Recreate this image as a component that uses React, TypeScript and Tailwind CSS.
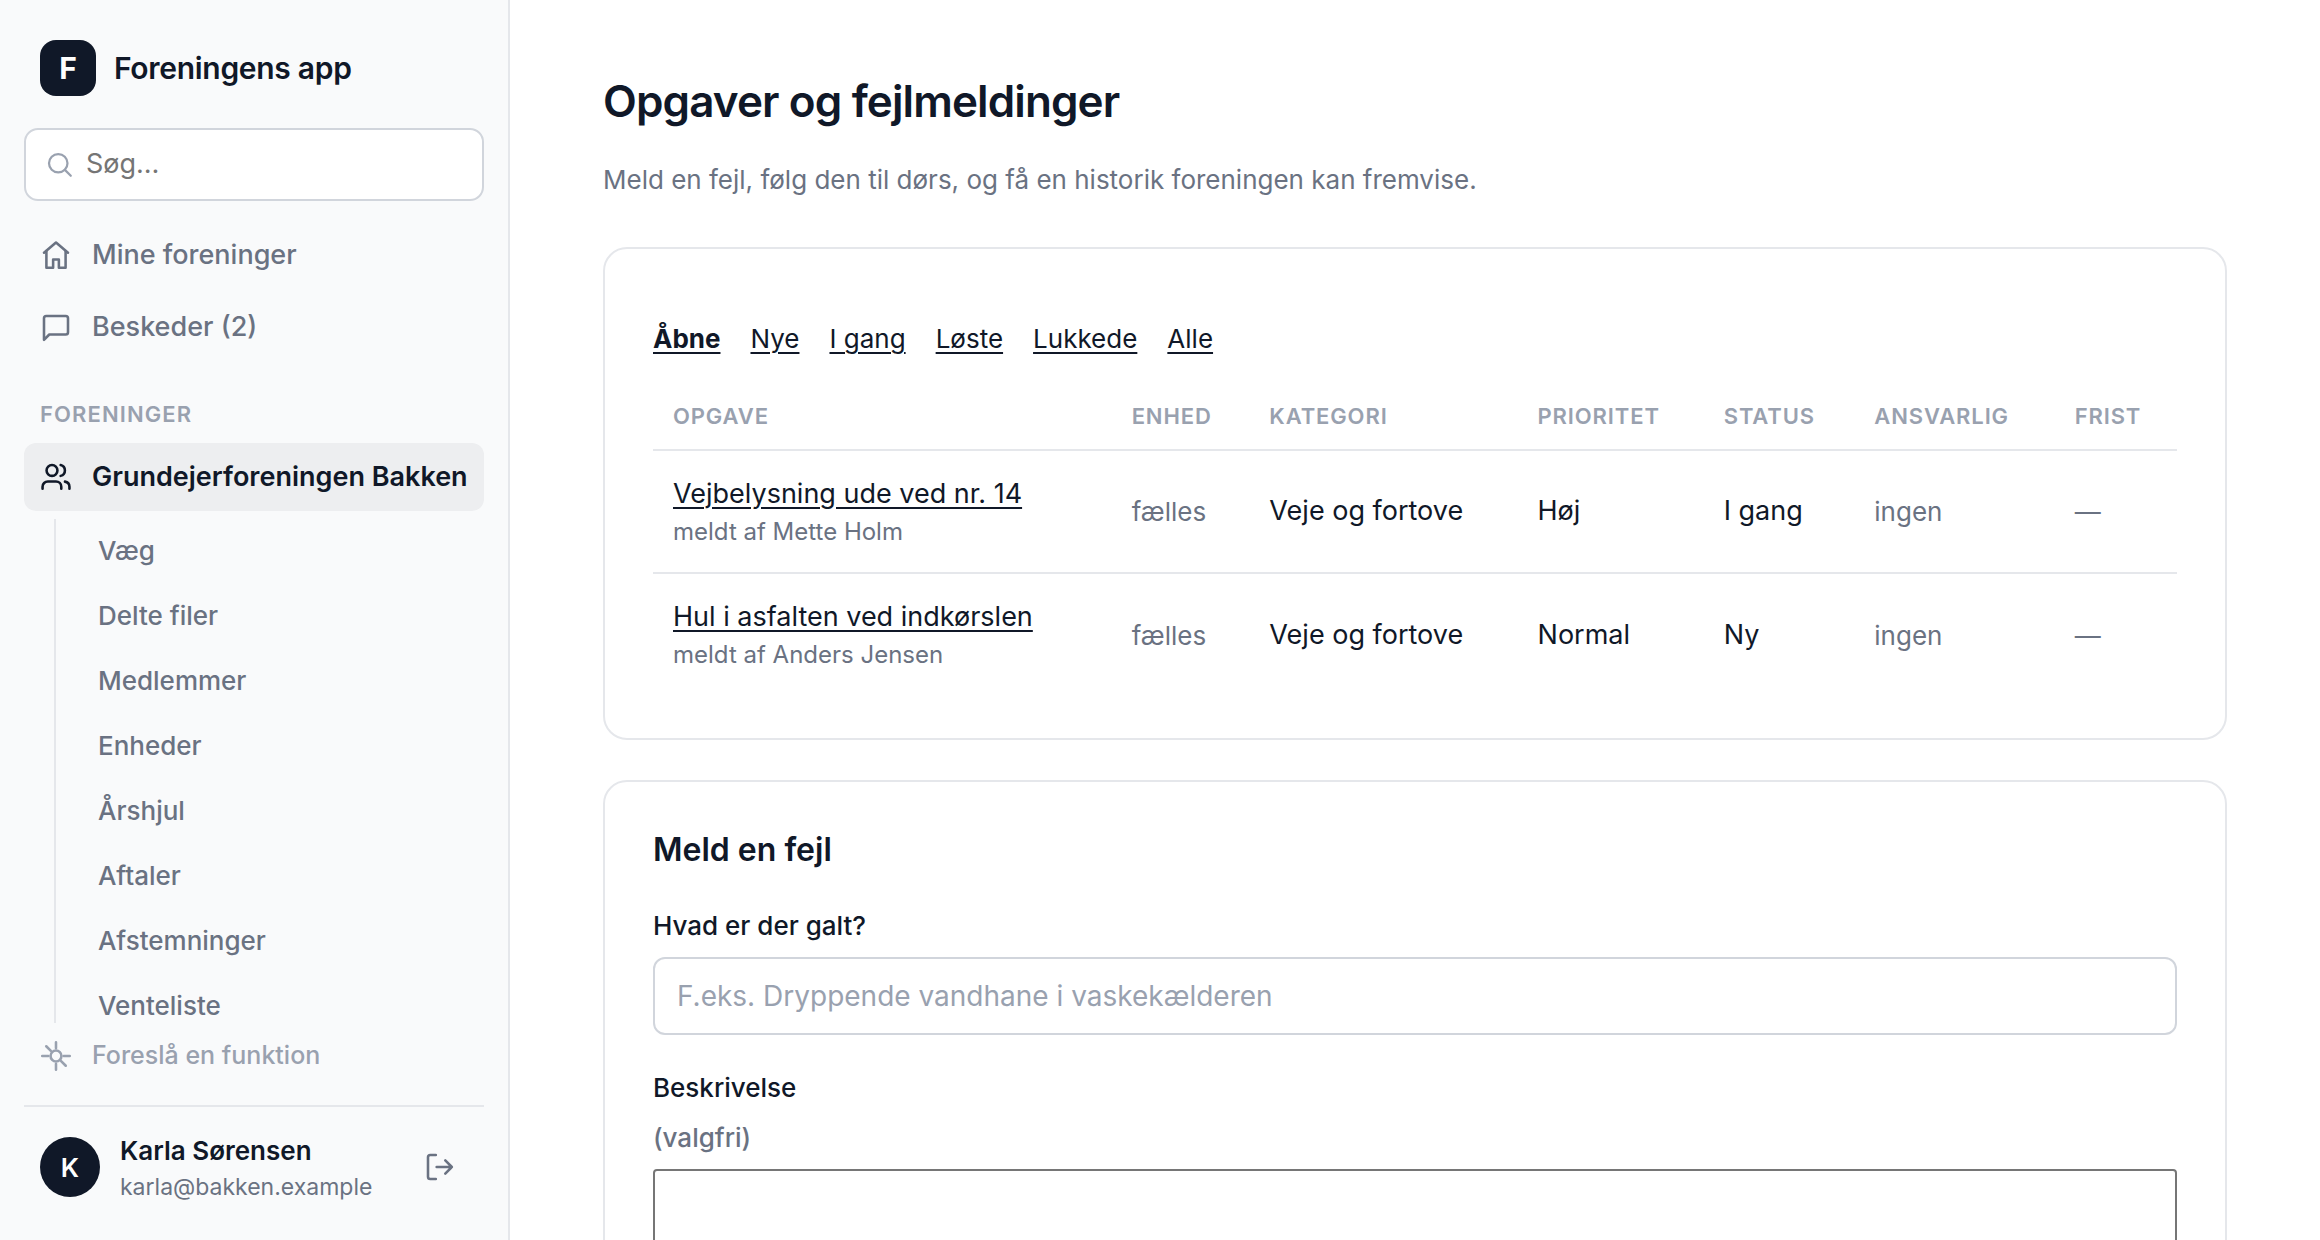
import { useState } from 'react';
import type { ReactNode } from 'react';

const sections = [
  'Væg',
  'Delte filer',
  'Medlemmer',
  'Enheder',
  'Årshjul',
  'Aftaler',
  'Afstemninger',
  'Venteliste',
];

const filters = ['Åbne', 'Nye', 'I gang', 'Løste', 'Lukkede', 'Alle'];

const tasks = [
  { title: 'Vejbelysning ude ved nr. 14', by: 'Mette Holm', category: 'Veje og fortove', priority: 'Høj', status: 'I gang' },
  { title: 'Hul i asfalten ved indkørslen', by: 'Anders Jensen', category: 'Veje og fortove', priority: 'Normal', status: 'Ny' },
];

function Icon({ children, className = 'size-8' }: { children: ReactNode; className?: string }) {
  return (
    <svg
      viewBox="0 0 20 20"
      fill="none"
      stroke="currentColor"
      strokeWidth="1.6"
      strokeLinecap="round"
      strokeLinejoin="round"
      aria-hidden="true"
      className={`shrink-0 ${className}`}
    >
      {children}
    </svg>
  );
}

function Sidebar() {
  return (
    <aside className="flex h-screen w-[510px] shrink-0 flex-col border-r-2 border-gray-200 bg-gray-50 px-6 pt-10 pb-[37px]">
      <a href="#" className="flex items-center gap-[18px] px-4">
        <span className="flex size-14 items-center justify-center rounded-2xl bg-gray-900 text-[30px] font-bold text-white">F</span>
        <span className="text-[30px] font-semibold tracking-[-0.01em] text-gray-900">Foreningens app</span>
      </a>

      <label className="mt-8 flex h-[73px] shrink-0 items-center gap-3 rounded-[14px] border-2 border-gray-300 bg-white px-5">
        <Icon className="size-7 text-gray-400">
          <circle cx="8.75" cy="8.75" r="6.6" />
          <path d="M13.5 13.5l4.2 4.2" />
        </Icon>
        <input type="search" aria-label="Søg" placeholder="Søg…" className="min-w-0 flex-1 text-[27px] outline-none placeholder:text-[#757575]" />
      </label>

      <nav className="mt-5 flex min-h-0 flex-1 flex-col overflow-hidden text-[27px] font-medium text-gray-500">
        <a href="#" className="mb-1 flex h-[68px] shrink-0 items-center gap-5 px-4">
          <Icon>
            <path d="M2.5 8.6L10 2.2l7.5 6.4" />
            <path d="M4 7.5V18h4.2v-5.2h3.6V18H16V7.5" />
          </Icon>
          Mine foreninger
        </a>
        <a href="#" className="flex h-[68px] shrink-0 items-center gap-5 px-4">
          <Icon>
            <path d="M2.5 18V4.5a1.4 1.4 0 0 1 1.4-1.4h12.2a1.4 1.4 0 0 1 1.4 1.4v8.8a1.4 1.4 0 0 1-1.4 1.4H5.8z" />
          </Icon>
          Beskeder (2)
        </a>
        <h2 className="mt-9 px-4 pb-3 text-[22px] leading-[34px] font-semibold tracking-wider text-gray-400">FORENINGER</h2>
        <a href="#" className="flex h-[68px] shrink-0 items-center gap-5 rounded-xl bg-gray-900/5 px-4 font-semibold whitespace-nowrap text-gray-900">
          <Icon>
            <circle cx="7.5" cy="5.9" r="3.4" />
            <path d="M1.6 17.3v-1.2a3.3 3.3 0 0 1 3.3-3.3H10a3.3 3.3 0 0 1 3.3 3.3v1.2" />
            <path d="M12.9 2.5a3.5 3.5 0 0 1 0 6.8" />
            <path d="M18.4 17.3v-1.2a3.3 3.3 0 0 0-2.8-3.2" />
          </Icon>
          Grundejerforeningen Bakken
        </a>
        <ul className="mt-2 ml-[30px] flex flex-col gap-0.5 border-l-2 border-gray-200 text-[26px]">
          {sections.map((name) => (
            <li key={name}>
              <a href="#" className="flex h-[63px] items-center px-[42px]">{name}</a>
            </li>
          ))}
        </ul>
      </nav>

      <a href="#" className="flex h-[66px] shrink-0 items-center gap-5 px-4 text-[25px] font-medium text-gray-400">
        <Icon>
          <circle cx="10" cy="10" r="3.4" />
          <path d="M10 1.4v3.8M10 14.8v3.8M1.4 10h3.8M14.8 10h3.8M3.9 3.9l2.9 2.9M13.2 13.2l2.9 2.9" />
        </Icon>
        Foreslå en funktion
      </a>

      <div className="mt-4 flex shrink-0 items-center gap-5 border-t-2 border-gray-200 px-4 pt-6">
        <span className="flex size-[60px] items-center justify-center rounded-full bg-gray-900 text-[26px] font-semibold text-white">K</span>
        <div className="flex-1">
          <div className="text-[26px] leading-10 font-semibold text-gray-900">Karla Sørensen</div>
          <div className="text-[23px] leading-8 text-gray-500">karla@bakken.example</div>
        </div>
        <button aria-label="Log ud" className="p-3 text-gray-500">
          <Icon>
            <path d="M7.4 2.5H3.9a1.4 1.4 0 0 0-1.4 1.4v12.2a1.4 1.4 0 0 0 1.4 1.4h3.5" />
            <path d="M7.9 10h9.5M13.3 5.9l4.1 4.1-4.1 4.1" />
          </Icon>
        </button>
      </div>
    </aside>
  );
}

function TaskTable() {
  return (
    <table className="mt-4 w-full text-left">
      <thead>
        <tr className="border-b-2 border-gray-200 text-[22px] leading-[34px] tracking-[0.04em] text-gray-400 [&>th]:h-[74px] [&>th]:px-5 [&>th]:pb-4 [&>th]:align-bottom [&>th]:font-semibold">
          <th>OPGAVE</th>
          <th>ENHED</th>
          <th>KATEGORI</th>
          <th>PRIORITET</th>
          <th>STATUS</th>
          <th>ANSVARLIG</th>
          <th>FRIST</th>
        </tr>
      </thead>
      <tbody>
        {tasks.map((task) => (
          <tr key={task.title} className="border-b-2 border-gray-200 text-[27px] text-gray-900 last:border-b-0 [&>td]:h-[123px] [&>td]:px-5">
            <td>
              <a href="#" className="block leading-10 underline decoration-2 underline-offset-4">{task.title}</a>
              <span className="block text-[24px] leading-9 text-gray-500">meldt af {task.by}</span>
            </td>
            <td className="text-[26px] text-gray-500">fælles</td>
            <td>{task.category}</td>
            <td>{task.priority}</td>
            <td>{task.status}</td>
            <td className="text-[26px] text-gray-500">ingen</td>
            <td className="text-[26px] text-gray-500">—</td>
          </tr>
        ))}
      </tbody>
    </table>
  );
}

export default function App() {
  const [active, setActive] = useState('Åbne');

  return (
    <div className="flex h-screen overflow-hidden bg-white font-['Inter',sans-serif] text-gray-900">
      <Sidebar />
      <main className="h-screen min-w-0 flex-1 overflow-hidden px-[93px] pt-[71px]">
        <h1 className="text-[44px] leading-[60px] font-semibold tracking-[-0.02em]">Opgaver og fejlmeldinger</h1>
        <p className="mt-7 text-[26px] leading-[42px] text-gray-500">Meld en fejl, følg den til dørs, og få en historik foreningen kan fremvise.</p>

        <section className="mt-[46px] rounded-3xl border-2 border-gray-200 px-12 pt-[69px] pb-[42px]">
          <div className="flex gap-[30px] text-[26px] leading-[42px]">
            {filters.map((name) => (
              <a
                key={name}
                href="#"
                onClick={() => setActive(name)}
                className={`underline decoration-2 underline-offset-4 ${name === active ? 'font-bold' : ''}`}
              >
                {name}
              </a>
            ))}
          </div>
          <TaskTable />
        </section>

        <section className="mt-10 rounded-3xl border-2 border-gray-200 p-12">
          <h2 className="text-[32px] leading-10 font-semibold">Meld en fejl</h2>
          <form className="mt-[35px] flex flex-col">
            <label htmlFor="title" className="text-[26px] leading-[42px] font-medium">Hvad er der galt?</label>
            <input
              id="title"
              placeholder="F.eks. Dryppende vandhane i vaskekælderen"
              className="mt-2.5 h-[78px] rounded-xl border-2 border-gray-300 px-[22px] text-[28px] outline-none placeholder:text-gray-400"
            />
            <label htmlFor="description" className="mt-8 text-[26px] leading-[42px] font-medium">Beskrivelse</label>
            <span className="mt-2 text-[26px] leading-[42px] font-medium text-gray-500">(valgfri)</span>
            <textarea id="description" rows={4} className="mt-2.5 rounded-[4px] border-2 border-[#767676] p-3 text-[27px] outline-none" />
          </form>
        </section>
      </main>
    </div>
  );
}
